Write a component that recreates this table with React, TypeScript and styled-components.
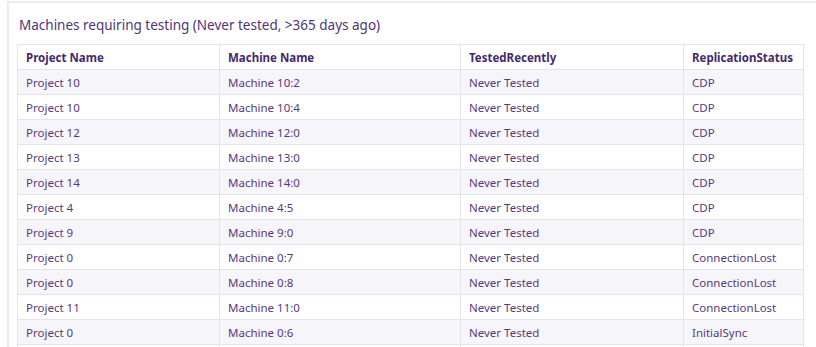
import React from "react";
import styled, { createGlobalStyle } from "styled-components";

const Global = createGlobalStyle`
  html, body { margin: 0; padding: 0; background: #ffffff; }
  body { font-family: "Noto Sans", "Open Sans", Arial, sans-serif; }
`;

const Card = styled.div`
  margin: 1px 0 0 7px;
  width: 830px;
  height: 360px;
  border: 2px solid #efe8f1;
  border-right: none;
  box-sizing: border-box;
  padding: 11px 0 0 8px;
`;

const Title = styled.h2`
  margin: 0 0 8px 2px;
  font-size: 13.5px;
  font-weight: 400;
  line-height: 22px;
  color: #4f3573;
`;

const Table = styled.table`
  border-collapse: collapse;
  table-layout: fixed;
  width: 786px;
  font-size: 11.5px;
  color: #583a7c;
`;

const HeadCell = styled.th`
  text-align: left;
  font-weight: 700;
  color: #46296b;
  height: 24px;
  padding: 0 8px;
  border: 1px solid #e6e3ec;
  background: #ffffff;
`;

const Row = styled.tr<{ $striped: boolean }>`
  background: ${(p) => (p.$striped ? "#f6f5f9" : "#ffffff")};
`;

const Cell = styled.td`
  height: 24px;
  padding: 0 8px;
  border: 1px solid #e6e3ec;
  white-space: nowrap;
`;

const columns = [
  { label: "Project Name", width: 202 },
  { label: "Machine Name", width: 241 },
  { label: "TestedRecently", width: 223 },
  { label: "ReplicationStatus", width: 120 },
];

const rows: [string, string, string, string][] = [
  ["Project 10", "Machine 10:2", "Never Tested", "CDP"],
  ["Project 10", "Machine 10:4", "Never Tested", "CDP"],
  ["Project 12", "Machine 12:0", "Never Tested", "CDP"],
  ["Project 13", "Machine 13:0", "Never Tested", "CDP"],
  ["Project 14", "Machine 14:0", "Never Tested", "CDP"],
  ["Project 4", "Machine 4:5", "Never Tested", "CDP"],
  ["Project 9", "Machine 9:0", "Never Tested", "CDP"],
  ["Project 0", "Machine 0:7", "Never Tested", "ConnectionLost"],
  ["Project 0", "Machine 0:8", "Never Tested", "ConnectionLost"],
  ["Project 11", "Machine 11:0", "Never Tested", "ConnectionLost"],
  ["Project 0", "Machine 0:6", "Never Tested", "InitialSync"],
  ["Project 3", "Machine 3:1", "Never Tested", "InitialSync"],
];

export default function App() {
  return (
    <>
      <Global />
      <Card>
        <Title>Machines requiring testing (Never tested, &gt;365 days ago)</Title>
        <Table>
          <colgroup>
            {columns.map((c) => (
              <col key={c.label} style={{ width: c.width }} />
            ))}
          </colgroup>
          <thead>
            <tr>
              {columns.map((c) => (
                <HeadCell key={c.label}>{c.label}</HeadCell>
              ))}
            </tr>
          </thead>
          <tbody>
            {rows.map((r, i) => (
              <Row key={i} $striped={i % 2 === 0}>
                {r.map((v, j) => (
                  <Cell key={j}>{v}</Cell>
                ))}
              </Row>
            ))}
          </tbody>
        </Table>
      </Card>
    </>
  );
}
